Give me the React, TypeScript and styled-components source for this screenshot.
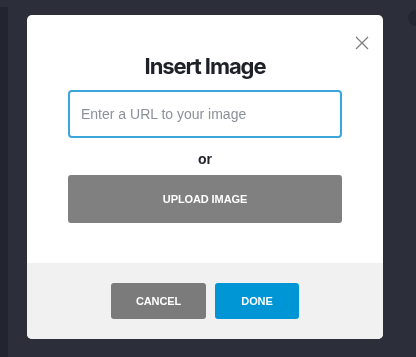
import React from "react";
import styled, { createGlobalStyle } from "styled-components";

const GlobalStyle = createGlobalStyle`
  * { box-sizing: border-box; }
  html, body { margin: 0; padding: 0; }
  body {
    width: 416px;
    height: 357px;
    overflow: hidden;
    background: #2c2f3a;
    font-family: "Liberation Sans", Arial, sans-serif;
  }
`;

export default function App() {
  return (
    <>
      <GlobalStyle />
      <Page>
        <Sidebar />
        <Main>
          <TopBar>
            <Avatar />
          </TopBar>
        </Main>
      </Page>
      <Overlay>
        <Modal>
          <CloseButton aria-label="Close">
            <svg width="14" height="14" viewBox="0 0 14 14">
              <path d="M1 1L13 13M13 1L1 13" stroke="#7d7d7d" strokeWidth="1.2" fill="none" />
            </svg>
          </CloseButton>
          <Body>
            <Title>Insert Image</Title>
            <UrlInput placeholder="Enter a URL to your image" />
            <Or>or</Or>
            <Button $bg="#808080" $width="100%" $height={48}>
              UPLOAD IMAGE
            </Button>
          </Body>
          <Footer>
            <Button $bg="#7b7b7b" $width="95px" $height={36}>
              CANCEL
            </Button>
            <Button $bg="#0096d6" $width="84px" $height={36}>
              DONE
            </Button>
          </Footer>
        </Modal>
      </Overlay>
    </>
  );
}

const Page = styled.div`
  display: flex;
  width: 416px;
  height: 357px;
`;

const Sidebar = styled.div`
  width: 8px;
  margin-top: 7px;
  background: #22252f;
`;

const Main = styled.div`
  flex: 1;
  display: flex;
  flex-direction: column;
`;

const TopBar = styled.div`
  display: flex;
  justify-content: flex-end;
  padding-top: 10px;
  margin-right: -8px;
`;

const Avatar = styled.div`
  width: 16px;
  height: 16px;
  border-radius: 50%;
  background: #242731;
`;

const Overlay = styled.div`
  position: fixed;
  inset: 0;
  display: flex;
  align-items: flex-start;
  justify-content: flex-start;
  padding: 15px 0 0 27px;
`;

const Modal = styled.div`
  position: relative;
  width: 356px;
  height: 324px;
  border-radius: 5px;
  overflow: hidden;
  display: flex;
  flex-direction: column;
  background: #ffffff;
`;

const CloseButton = styled.button`
  position: absolute;
  top: 21px;
  right: 14px;
  padding: 0;
  border: none;
  background: none;
  display: flex;
  cursor: pointer;
`;

const Body = styled.div`
  flex: 1;
  display: flex;
  flex-direction: column;
  align-items: center;
  padding: 36px 41px 0;
`;

const Title = styled.h1`
  margin: 0;
  font-family: Inter, "Noto Sans", sans-serif;
  font-size: 22px;
  line-height: 30px;
  font-weight: 700;
  letter-spacing: -1.1px;
  color: #1f2129;
`;

const UrlInput = styled.input`
  margin-top: 9px;
  width: 100%;
  height: 48px;
  padding: 0 11px;
  border: 2px solid #3ba6da;
  border-radius: 4px;
  outline: none;
  font-family: "Liberation Sans", Arial, sans-serif;
  font-size: 14px;
  color: #333;

  &::placeholder {
    color: #8c9199;
  }
`;

const Or = styled.div`
  margin: 12px 0 7px;
  font-size: 14px;
  line-height: 18px;
  font-weight: 700;
  color: #22242a;
`;

const Button = styled.button<{ $bg: string; $width: string; $height: number }>`
  width: ${(p) => p.$width};
  height: ${(p) => p.$height}px;
  border: none;
  border-radius: 3px;
  background: ${(p) => p.$bg};
  color: #ffffff;
  font-family: "Liberation Sans", Arial, sans-serif;
  font-size: 11px;
  font-weight: 700;
  letter-spacing: -0.1px;
  cursor: pointer;
`;

const Footer = styled.div`
  height: 76px;
  display: flex;
  justify-content: center;
  align-items: center;
  gap: 9px;
  background: #f1f1f1;
`;
